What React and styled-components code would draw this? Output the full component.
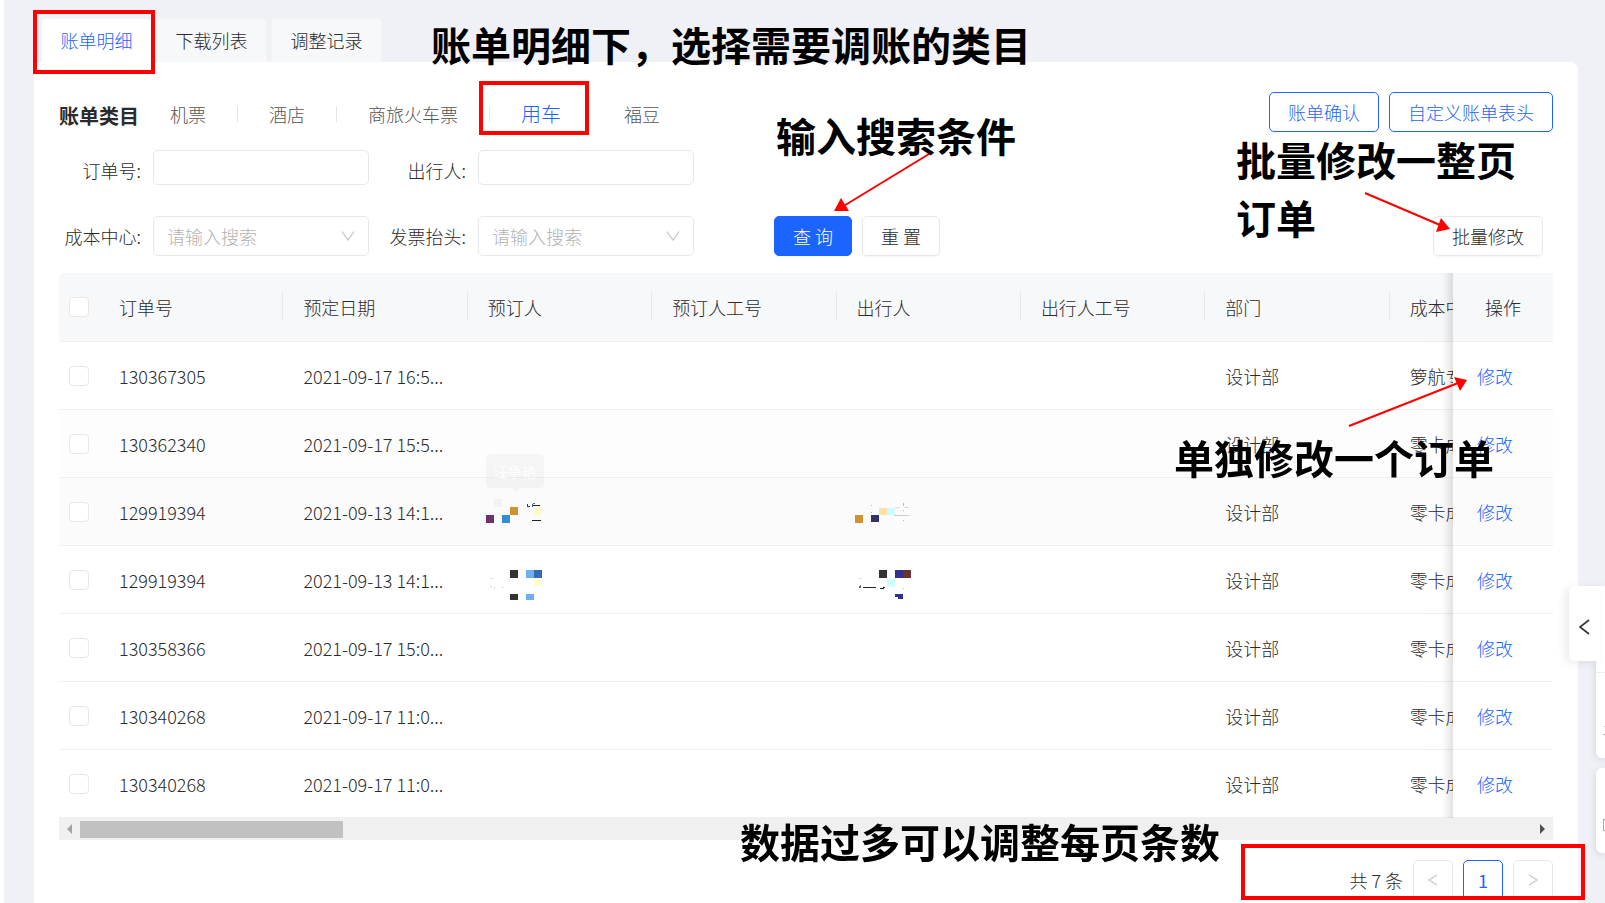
import { useState } from 'react';
import styled, { createGlobalStyle, css } from 'styled-components';

const GlobalStyle = createGlobalStyle`
    * {
        box-sizing: border-box;
    }
    body {
        margin: 0;
        background: #fff;
        color: #2b2b2b;
        font-family: 'Noto Sans CJK SC', 'Open Sans', sans-serif;
        font-size: 18px;
        font-weight: 300;
        line-height: 24px;
    }
    button, input, select {
        font: inherit;
        color: inherit;
    }
`

const Page = styled.div`
    position: relative;
    min-height: 100vh;
    overflow: hidden;
    display: flex;
    flex-direction: column;
    padding: 18px 27px 0 30px;
    border-left: 4px solid #fff;
    background: #f0f1f6;
`

const Tabs = styled.nav`
    display: flex;
    gap: 4px;
    padding-left: 7px;
`

const Tab = styled.button`
    height: 44px;
    width: 111px;
    padding: 0 0 2px;
    border: 1px solid #f3f3f5;
    border-bottom: 0;
    border-radius: 5px 5px 0 0;
    background: ${({ $active }) => ($active ? '#fff' : '#f7f8fa')};
    color: ${({ $active }) => ($active ? '#1c64ff' : '#2b2b2b')};
`

const Panel = styled.main`
    flex: 1;
    padding: 30px 25px 0;
    border-radius: 0 8px 0 0;
    background: #fff;
`

const PanelHead = styled.div`
    display: flex;
    align-items: flex-end;
    height: 40px;
`

const Heading = styled.h1`
    margin: 0;
    font-size: 20px;
    font-weight: bold;
    line-height: 32px;
`

const CategoryList = styled.ul`
    display: flex;
    align-items: center;
    height: 36px;
    margin: 0;
    padding: 0;
    list-style: none;
`

const CategoryItem = styled.li`
    display: flex;
    align-items: center;
    &:after {
        content: '';
        width: 1px;
        height: 16px;
        background: ${({ $plain }) => ($plain ? 'transparent' : '#e6e6e6')};
    }
`

const CategoryLink = styled.a`
    padding: 0 31px;
    color: ${({ $active }) => ($active ? '#1c64ff' : '#555')};
    font-size: ${({ $active }) => ($active ? '20px' : '18px')};
    text-decoration: none;
`

const ButtonGroup = styled.div`
    display: flex;
    gap: 10px;
    margin-left: auto;
`

const Button = styled.button`
    height: 40px;
    padding: 0 18px;
    border: 1px solid #e8e8e8;
    border-radius: 5px;
    background: #fff;
    box-shadow: 0 2px 0 rgba(0, 0, 0, 0.02);
    white-space: nowrap;
    cursor: pointer;
    ${({ $variant }) => $variant === 'outline' && css`
        border-color: #1c64ff;
        color: #1c64ff;
    `}
    ${({ $variant }) => $variant === 'primary' && css`
        border-color: #1c64ff;
        background: #1c64ff;
        color: #fff;
    `}
`

const SearchForm = styled.form`
    display: grid;
    grid-template-columns: 310px 310px 1fr;
    column-gap: 15px;
    row-gap: 31px;
    margin: 18px 0 17px;
`

const Field = styled.div`
    grid-column: ${({ $column }) => $column};
    display: flex;
    gap: 12px;
    height: ${({ $tall }) => ($tall ? '40px' : '35px')};
`

const Label = styled.label`
    width: 82px;
    line-height: 40px;
    text-align: right;
    white-space: nowrap;
`

const Input = styled.input`
    width: 216px;
    padding: 0 14px;
    border: 1px solid #e8e8e8;
    border-radius: 5px;
    outline: 0;
`

const SelectBox = styled.div`
    position: relative;
    width: 216px;
`

const Select = styled.select`
    appearance: none;
    width: 100%;
    height: 100%;
    padding: 0 13px;
    border: 1px solid #e8e8e8;
    border-radius: 5px;
    background: #fff;
    color: #b3b3b3;
`

const SelectArrow = styled.svg`
    position: absolute;
    right: 14px;
    top: 14px;
    pointer-events: none;
`

const Actions = styled.div`
    display: flex;
    gap: 10px;
    padding: 0 10px 0 65px;
`

const BatchButton = styled(Button)`
    margin-left: auto;
`

const TableScroll = styled.div`
    overflow: hidden;
    border-radius: 5px 0 0 0;
`

const Table = styled.table`
    width: 1615px;
    table-layout: fixed;
    border-collapse: separate;
    border-spacing: 0;
`

const HeadCell = styled.th`
    position: relative;
    height: 69px;
    padding: 0 20px;
    border-bottom: 1px solid #f0f0f0;
    background: #f7f8fa;
    font-weight: inherit;
    text-align: left;
    white-space: nowrap;
    &:after {
        content: '';
        position: absolute;
        right: 0;
        top: 19px;
        width: 1px;
        height: 28px;
        background: #e8e8e8;
    }
`

const Cell = styled.td`
    position: relative;
    height: 68px;
    padding: 0 20px;
    border-bottom: 1px solid #f0f0f0;
    background: ${({ $tint }) => $tint || '#fff'};
    white-space: nowrap;
`

const checkCell = css`
    width: 40px;
    padding: 0 10px;
    &:after {
        display: none;
    }
`

const fixedCell = css`
    position: sticky;
    right: 0;
    z-index: 1;
    width: 100px;
    padding: 0 24px;
    &:before {
        content: '';
        position: absolute;
        top: 0;
        bottom: -1px;
        right: 100%;
        width: 30px;
        box-shadow: inset -12px 0 10px -8px rgba(0, 0, 0, 0.14);
    }
    &:after {
        display: none;
    }
`

const HeadCheckCell = styled(HeadCell)`${checkCell}`
const CheckCell = styled(Cell)`${checkCell}`
const HeadFixedCell = styled(HeadCell)`
    ${fixedCell}
    text-align: center;
`
const FixedCell = styled(Cell)`${fixedCell}`

const Checkbox = styled.input`
    appearance: none;
    display: block;
    width: 20px;
    height: 20px;
    margin: 0;
    border: 1px solid #e8e8e8;
    border-radius: 4px;
    background: #fff;
    &:checked {
        background: #1c64ff;
    }
`

const EditLink = styled.a`
    color: #1c64ff;
    text-decoration: none;
`

const Mosaic = styled.svg`
    display: block;
    overflow: visible;
`

const Tooltip = styled.div`
    position: absolute;
    left: 18px;
    top: -24px;
    padding: 5px 8px;
    border-radius: 4px;
    background: rgba(0, 0, 0, 0.03);
    color: rgba(255, 255, 255, 0.9);
    font-size: 14px;
    font-weight: 400;
    &:after {
        content: '';
        position: absolute;
        left: 26px;
        top: 100%;
        border: 4px solid transparent;
        border-top-color: rgba(0, 0, 0, 0.03);
        border-bottom: 0;
    }
`

const ScrollBar = styled.div`
    display: flex;
    align-items: center;
    gap: 8px;
    height: 22px;
    padding: 0 8px;
    background: #f0f0f0;
`

const ScrollThumb = styled.div`
    width: 263px;
    height: 17px;
    background: #c1c1c1;
`

const ScrollArrow = styled.svg`
    flex: none;
    &:last-child {
        margin-left: auto;
    }
`

const Pagination = styled.nav`
    display: flex;
    justify-content: flex-end;
    align-items: center;
    gap: 10px;
    padding-top: 20px;
`

const PageButton = styled.button`
    display: flex;
    align-items: center;
    justify-content: center;
    width: 40px;
    height: 40px;
    padding: 0;
    border: 1px solid ${({ $active }) => ($active ? '#1c64ff' : '#e8e8e8')};
    border-radius: 5px;
    background: #fff;
    color: ${({ $active }) => ($active ? '#1c64ff' : '#ccc')};
    font-weight: ${({ $active }) => ($active ? 400 : 300)};
`

const SideDock = styled.aside`
    position: absolute;
    top: 586px;
    right: 0;
    width: 9px;
    display: flex;
    flex-direction: column;
    gap: 10px;
`

const SideCard = styled.div`
    display: flex;
    flex-direction: column;
    align-items: flex-end;
    justify-content: space-between;
    height: ${({ $height }) => $height};
    padding-bottom: 22px;
    border-radius: 6px 0 0 6px;
    background: #fff;
    box-shadow: 0 2px 8px rgba(0, 0, 0, 0.12);
    &:before {
        content: '';
        width: 100%;
        height: ${({ $divided }) => ($divided ? '86px' : '0')};
        border-bottom: ${({ $divided }) => ($divided ? '1px' : '0')} solid #eee;
    }
`

const DockToggle = styled.button`
    position: absolute;
    top: 0;
    right: 5px;
    display: flex;
    align-items: center;
    width: 31px;
    height: 75px;
    padding: 6px 10px 0;
    border: 0;
    border-radius: 6px 0 0 6px;
    background: #fff;
    box-shadow: -4px 2px 8px rgba(0, 0, 0, 0.08);
`

const Note = styled.p`
    position: absolute;
    left: ${({ $x }) => $x}px;
    top: ${({ $y }) => $y}px;
    z-index: 3;
    margin: 0;
    color: #000;
    font-size: 40px;
    font-weight: bold;
    line-height: 58px;
    white-space: nowrap;
    pointer-events: none;
`

const Frame = styled.div`
    position: absolute;
    left: ${({ $x }) => $x}px;
    top: ${({ $y }) => $y}px;
    z-index: 3;
    width: ${({ $w }) => $w}px;
    height: ${({ $h }) => $h}px;
    border: 4px solid #f00;
    pointer-events: none;
`

const Arrows = styled.svg`
    position: absolute;
    left: 0;
    top: 0;
    z-index: 3;
    pointer-events: none;
`

const tabs = ['账单明细', '下载列表', '调整记录'];
const categories = ['机票', '酒店', '商旅火车票', '用车', '福豆'];
const columns = ['订单号', '预定日期', '预订人', '预订人工号', '出行人', '出行人工号', '部门', '成本中心'];

// x, y, width, height, fill
const mosaics = {
    bookerA: [
        [6, 4, 8, 8, '#f3f3f3'], [-2, 20, 8, 8, '#6b3270'], [14, 20, 8, 8, '#328fd3'],
        [22, 12, 8, 8, '#cf9132'], [46, 12, 8, 8, '#fdfbcc'], [39, 9, 1, 3, '#5a2a66'],
        [39, 11, 3, 1, '#5a2a66'], [44, 10, 8, 1, '#222'], [45, 8, 2, 1, '#8a5a2a'],
        [44, 9, 1, 3, '#36b'], [44, 25, 9, 1, '#222'],
    ],
    travelerA: [
        [-2, 20, 8, 8, '#cf9132'], [14, 20, 8, 7, '#34316a'], [22, 13, 8, 7, '#fbe2aa'],
        [30, 13, 8, 7, '#ccfdfc'], [37, 20, 15, 1, '#ccc'], [46, 8, 1, 3, '#bbb'],
        [38, 12, 5, 1, '#ddd'], [48, 12, 3, 1, '#ccc'], [14, 10, 1, 1, '#bbb'],
        [14, 17, 1, 1, '#bbb'], [46, 15, 1, 1, '#bbb'], [46, 25, 1, 1, '#bbb'],
    ],
    bookerB: [
        [22, 7, 8, 8, '#333'], [38, 7, 8, 8, '#6db0ee'], [46, 7, 8, 8, '#336cb0'],
        [46, 16, 8, 7, '#fffdcc'], [22, 31, 8, 6, '#333'], [38, 31, 8, 6, '#6db0ee'],
        [2, 15, 3, 1, '#ddd'], [6, 24, 1, 1, '#bbb'], [14, 24, 1, 1, '#bbb'], [2, 23, 2, 1, '#ddd'],
    ],
    travelerB: [
        [22, 7, 8, 8, '#333'], [38, 7, 8, 8, '#333190'], [46, 7, 8, 8, '#6e3133'],
        [30, 16, 8, 8, '#ccffff'], [38, 31, 8, 3, '#333190'], [41, 33, 5, 3, '#333190'],
        [6, 24, 13, 1, '#222'], [2, 23, 2, 2, '#36a'], [3, 22, 1, 1, '#c83'],
        [23, 25, 4, 1, '#222'], [26, 24, 2, 1, '#222'], [2, 15, 3, 1, '#ddd'], [46, 25, 1, 1, '#bbb'],
    ],
};

const rows = [
    { id: '130367305', date: '2021-09-17 16:5...', center: '箩航专项' },
    { id: '130362340', date: '2021-09-17 15:5...', center: '零卡成本', tint: '#fdfdfd' },
    { id: '129919394', date: '2021-09-13 14:1...', center: '零卡成本', tint: '#fbfbfb', booker: 'bookerA', traveler: 'travelerA', tip: '汪争艳' },
    { id: '129919394', date: '2021-09-13 14:1...', center: '零卡成本', booker: 'bookerB', traveler: 'travelerB' },
    { id: '130358366', date: '2021-09-17 15:0...', center: '零卡成本' },
    { id: '130340268', date: '2021-09-17 11:0...', center: '零卡成本' },
    { id: '130340268', date: '2021-09-17 11:0...', center: '零卡成本' },
];

const MaskedName = ({ name }) => (
    <Mosaic width="60" height="34" aria-hidden="true">
        {mosaics[name].map(([x, y, w, h, fill], i) => (
            <rect key={i} x={x} y={y} width={w} height={h} fill={fill} />
        ))}
    </Mosaic>
)

const SearchSelect = ({ id }) => (
    <SelectBox>
        <Select id={id} defaultValue="">
            <option value="">请输入搜索</option>
        </Select>
        <SelectArrow width="14" height="12" fill="none" stroke="#c8c8c8" strokeWidth="1.3">
            <path d="M1 1.5L7 10L13 1.5" />
        </SelectArrow>
    </SelectBox>
)

const OrderTable = () => (
    <>
        <TableScroll>
            <Table>
                <thead>
                    <tr>
                        <HeadCheckCell><Checkbox type="checkbox" aria-label="全选" /></HeadCheckCell>
                        {columns.map((name) => <HeadCell key={name}>{name}</HeadCell>)}
                        <HeadFixedCell>操作</HeadFixedCell>
                    </tr>
                </thead>
                <tbody>
                    {rows.map(({ id, date, center, tint, booker, traveler, tip }, i) => (
                        <tr key={i}>
                            <CheckCell $tint={tint}><Checkbox type="checkbox" aria-label={id} /></CheckCell>
                            <Cell $tint={tint}>{id}</Cell>
                            <Cell $tint={tint}>{date}</Cell>
                            <Cell $tint={tint}>
                                {booker && <MaskedName name={booker} />}
                                {tip && <Tooltip>{tip}</Tooltip>}
                            </Cell>
                            <Cell $tint={tint} />
                            <Cell $tint={tint}>{traveler && <MaskedName name={traveler} />}</Cell>
                            <Cell $tint={tint} />
                            <Cell $tint={tint}>设计部</Cell>
                            <Cell $tint={tint}>{center}</Cell>
                            <FixedCell $tint={tint}><EditLink href="#edit">修改</EditLink></FixedCell>
                        </tr>
                    ))}
                </tbody>
            </Table>
        </TableScroll>
        <ScrollBar>
            <ScrollArrow width="5" height="10"><path d="M5 0V10L0 5Z" fill="#a3a3a3" /></ScrollArrow>
            <ScrollThumb />
            <ScrollArrow width="5" height="10"><path d="M0 0V10L5 5Z" fill="#505050" /></ScrollArrow>
        </ScrollBar>
    </>
)

const Annotations = () => (
    <>
        <Note $x={427} $y={15}>账单明细下，选择需要调账的类目</Note>
        <Note $x={772} $y={106}>输入搜索条件</Note>
        <Note $x={1232} $y={130}>批量修改一整页<br />订单</Note>
        <Note $x={1170} $y={428}>单独修改一个订单</Note>
        <Note $x={736} $y={812}>数据过多可以调整每页条数</Note>
        <Frame $x={29} $y={10} $w={122} $h={64} />
        <Frame $x={475} $y={81} $w={110} $h={54} />
        <Frame $x={1237} $y={844} $w={344} $h={56} />
        <Arrows width="1500" height="450" stroke="#f00" strokeWidth="2" fill="#f00">
            <path d="M925 154L838 207" />
            <path d="M830 211L837 198L845 211Z" stroke="none" />
            <path d="M1361 193L1436 225" />
            <path d="M1446 229L1437 218L1432 232Z" stroke="none" />
            <path d="M1345 426L1454 383" />
            <path d="M1463 380L1450 377L1456 391Z" stroke="none" />
        </Arrows>
    </>
)

export default function App() {
    const [tab, setTab] = useState('账单明细');
    const [category, setCategory] = useState('用车');

    return (
        <>
        <GlobalStyle/>
        <Page>
            <Tabs>
                {tabs.map((name) => (
                    <Tab key={name} $active={name === tab} onClick={() => setTab(name)}>{name}</Tab>
                ))}
            </Tabs>
            <Panel>
                <PanelHead>
                    <Heading>账单类目</Heading>
                    <CategoryList>
                        {categories.map((name, i) => (
                            <CategoryItem key={name} $plain={i > 2}>
                                <CategoryLink href="#category" $active={name === category} onClick={() => setCategory(name)}>{name}</CategoryLink>
                            </CategoryItem>
                        ))}
                    </CategoryList>
                    <ButtonGroup>
                        <Button $variant="outline">账单确认</Button>
                        <Button $variant="outline">自定义账单表头</Button>
                    </ButtonGroup>
                </PanelHead>
                <SearchForm onSubmit={(e) => e.preventDefault()}>
                    <Field $column={1}>
                        <Label htmlFor="order">订单号:</Label>
                        <Input id="order" type="text" />
                    </Field>
                    <Field $column={2}>
                        <Label htmlFor="traveler">出行人:</Label>
                        <Input id="traveler" type="text" />
                    </Field>
                    <Field $column={1} $tall>
                        <Label htmlFor="center">成本中心:</Label>
                        <SearchSelect id="center" />
                    </Field>
                    <Field $column={2} $tall>
                        <Label htmlFor="invoice">发票抬头:</Label>
                        <SearchSelect id="invoice" />
                    </Field>
                    <Actions>
                        <Button $variant="primary" type="submit">查 询</Button>
                        <Button type="reset">重 置</Button>
                        <BatchButton type="button">批量修改</BatchButton>
                    </Actions>
                </SearchForm>
                <OrderTable />
                <Pagination>
                    <span>共 7 条</span>
                    <PageButton aria-label="上一页">
                        <svg width="10" height="14" fill="none" stroke="currentColor" strokeWidth="1.3"><path d="M9 2L1 7L9 12" /></svg>
                    </PageButton>
                    <PageButton $active>1</PageButton>
                    <PageButton aria-label="下一页">
                        <svg width="10" height="14" fill="none" stroke="currentColor" strokeWidth="1.3"><path d="M1 2L9 7L1 12" /></svg>
                    </PageButton>
                </Pagination>
            </Panel>
            <SideDock>
                <SideCard $height="172px" $divided>
                    <svg width="2" height="12" fill="#bbb"><path d="M1 2h1v1h-1zM0 10h2v1h-2z" /></svg>
                </SideCard>
                <SideCard $height="85px">
                    <svg width="2" height="12" fill="#aaa"><path d="M0 0h2v1h-1v10h1v1h-2z" /></svg>
                </SideCard>
                <DockToggle aria-label="展开">
                    <svg width="11" height="16" fill="none" stroke="#333" strokeWidth="1.6"><path d="M10 1L1 8L10 15" /></svg>
                </DockToggle>
            </SideDock>
            <Annotations />
        </Page>
        </>
    )
}
